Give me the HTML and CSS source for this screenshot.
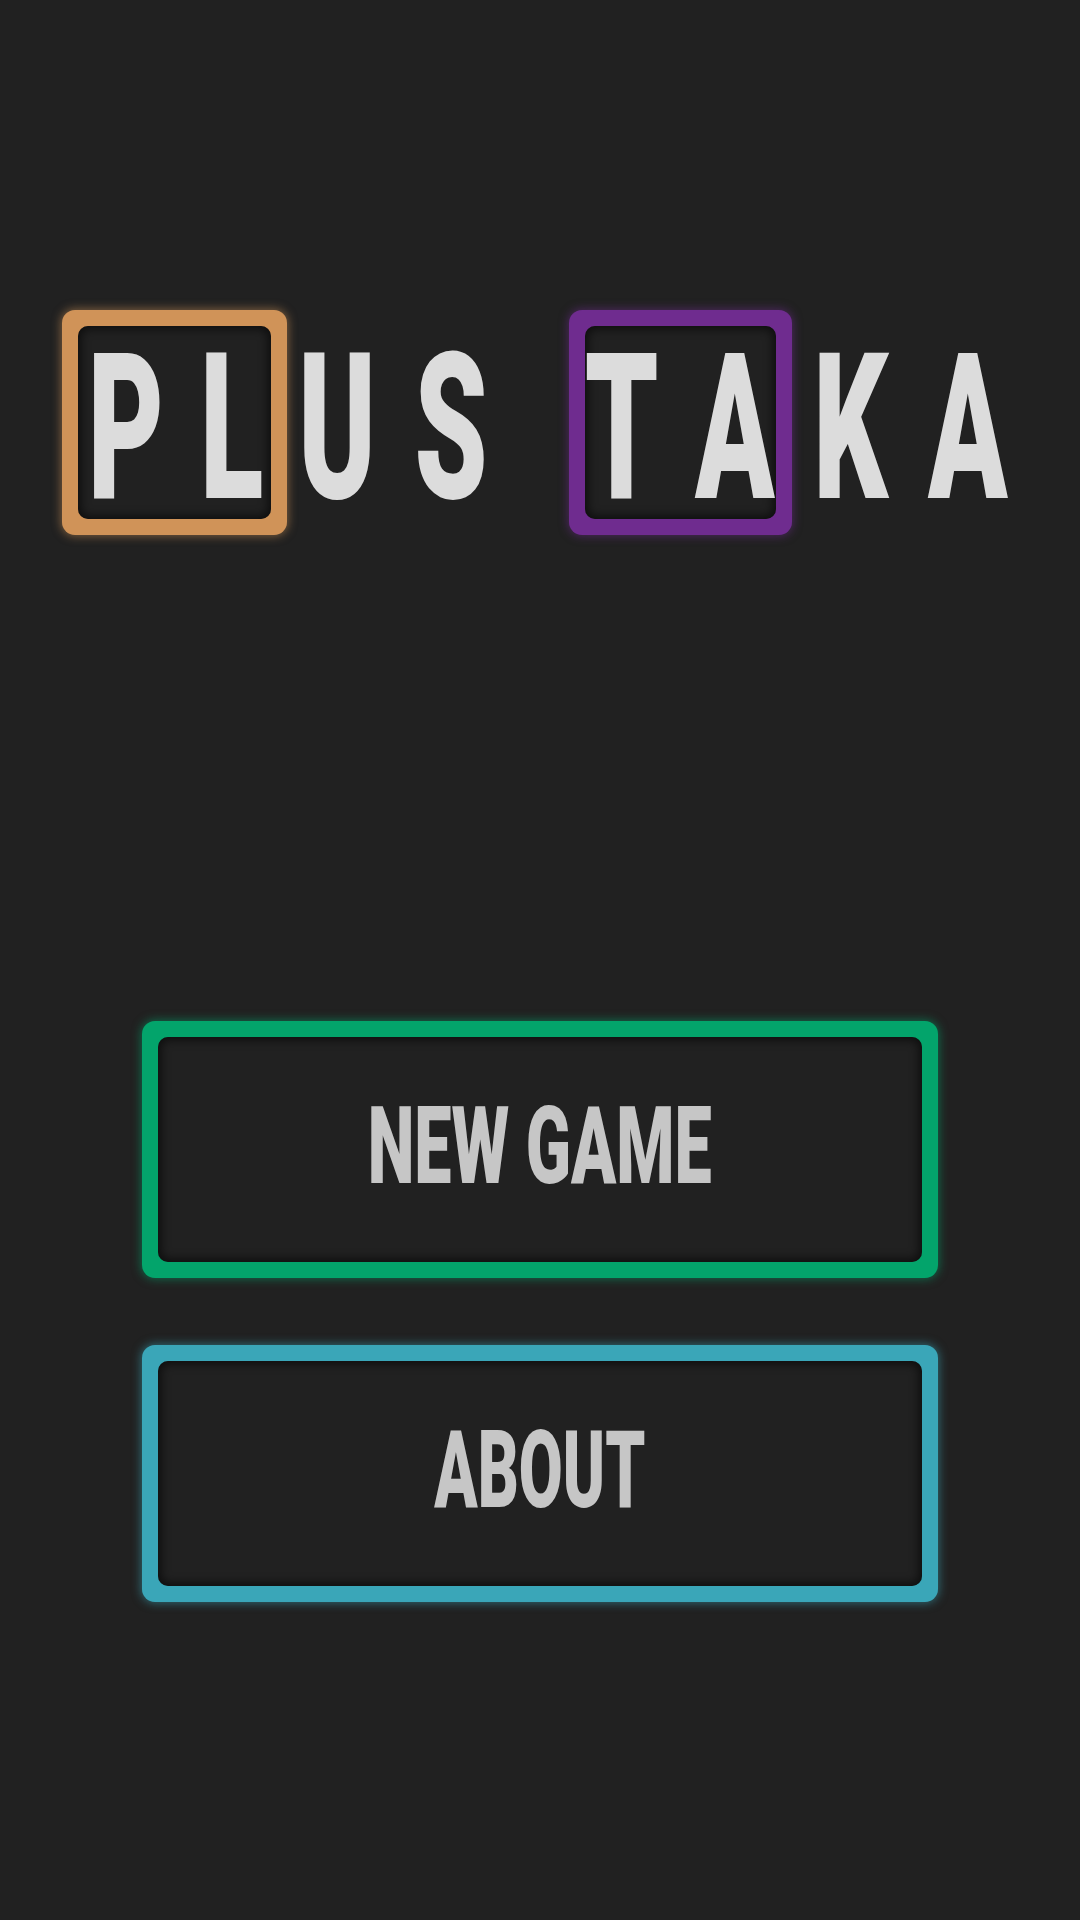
FILE: index.html
```html
<!DOCTYPE html>
<html lang="en">
<head>
<meta charset="utf-8">
<title>Plus Taka</title>
<link rel="stylesheet" href="styles.css">
</head>
<body>
<main class="screen">
  <h1 class="title">
    <span class="pair">
      <span class="frame frame-orange"></span>
      <span class="ch"><span class="glyph">P</span></span><span class="ch"><span class="glyph">L</span></span>
    </span>
    <span class="ch"><span class="glyph">U</span></span><span class="ch ch-s"><span class="glyph">S</span></span>
    <span class="gap"></span>
    <span class="pair">
      <span class="frame frame-purple"></span>
      <span class="ch"><span class="glyph">T</span></span><span class="ch ch-a1"><span class="glyph">A</span></span>
    </span>
    <span class="ch ch-k"><span class="glyph">K</span></span><span class="ch ch-a2"><span class="glyph">A</span></span>
  </h1>
  <nav class="menu">
    <button class="btn btn-green"><span class="btn-inner"><span class="label label-wide">NEW GAME</span></span></button>
    <button class="btn btn-teal"><span class="btn-inner"><span class="label">ABOUT</span></span></button>
  </nav>
</main>
</body>
</html>
```
FILE: styles.css
```css
html, body {
  margin: 0;
  padding: 0;
  background: #212121;
}
body {
  width: 1080px;
  height: 1920px;
  overflow: hidden;
  font-family: Roboto, "Liberation Sans", sans-serif;
}
.screen {
  display: flex;
  flex-direction: column;
  align-items: center;
}
.title {
  margin: 310px 0 0 13px;
  display: flex;
  height: 236px;
  font-weight: 900;
  font-size: 205px;
  line-height: 236px;
  color: #dcdcdc;
}
.pair {
  position: relative;
  display: flex;
}
.ch {
  position: relative;
  z-index: 1;
  width: 106px;
  display: flex;
  justify-content: center;
}
.ch-s {
  margin-left: 8px;
}
.ch-a1 {
  margin-left: 7px;
}
.ch-k {
  margin-left: 10px;
}
.ch-a2 {
  margin-left: 11px;
}
.glyph {
  display: block;
  flex: none;
  transform: scaleX(0.57);
  transform-origin: center;
}
.gap {
  width: 64px;
}
.frame {
  position: absolute;
  top: 0;
  height: 225px;
  border-radius: 13px;
  z-index: 0;
}
.frame::after {
  content: "";
  position: absolute;
  inset: 16px;
  border-radius: 10px;
  background: #212121;
  box-shadow: inset 0 0 10px 3px rgba(0, 0, 0, 0.6);
}
.frame-orange {
  left: -11px;
  width: 225px;
  background: #d09358;
  box-shadow: 0 0 10px 1px rgba(208, 147, 88, 0.55);
}
.frame-purple {
  left: 0;
  width: 223px;
  background: #6f2c8f;
  box-shadow: 0 0 10px 1px rgba(111, 44, 143, 0.55);
}
.menu {
  margin-top: 475px;
  display: flex;
  flex-direction: column;
  gap: 67px;
}
.btn {
  display: block;
  width: 796px;
  height: 257px;
  padding: 16px;
  border: none;
  border-radius: 13px;
  font: inherit;
  cursor: pointer;
}
.btn-green {
  background: #03a46b;
  box-shadow: 0 0 10px 1px rgba(3, 164, 107, 0.55);
}
.btn-teal {
  background: #3aa6b8;
  box-shadow: 0 0 10px 1px rgba(58, 166, 184, 0.55);
}
.btn-inner {
  display: flex;
  align-items: center;
  justify-content: center;
  box-sizing: border-box;
  height: 100%;
  padding-bottom: 8px;
  border-radius: 10px;
  background: #212121;
  box-shadow: inset 0 0 10px 3px rgba(0, 0, 0, 0.6);
}
.label {
  display: block;
  flex: none;
  font-family: Roboto, "Liberation Sans", sans-serif;
  font-weight: 900;
  font-size: 108px;
  line-height: 1;
  color: #c6c6c6;
  white-space: nowrap;
  transform: scaleX(0.59);
  transform-origin: center;
}
.label-wide {
  transform: scaleX(0.615);
}
```
